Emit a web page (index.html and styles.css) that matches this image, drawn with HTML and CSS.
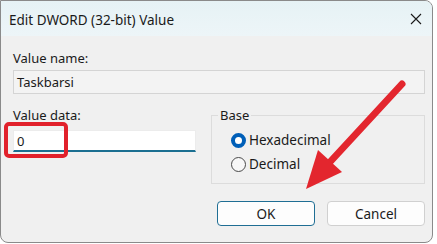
FILE: index.html
```html
<!DOCTYPE html>
<html lang="en">
<head>
  <meta charset="UTF-8">
  <title>Edit DWORD (32-bit) Value</title>
  <link rel="stylesheet" href="styles.css">
</head>
<body>
  <div class="window">
    <div class="titlebar">
      <span class="title">Edit DWORD (32-bit) Value</span>
      <svg class="close" viewBox="0 0 12 12" width="12" height="12">
        <path d="M1 1 L11 11 M11 1 L1 11" stroke="#1a1a1a" stroke-width="1.1" fill="none"/>
      </svg>
    </div>

    <div class="content">
      <div class="label name-label">Value name:</div>
      <div class="field readonly">Taskbarsi</div>

      <div class="row">
        <div class="data-col">
          <div class="label">Value data:</div>
          <div class="field active">0</div>
        </div>

        <fieldset class="group">
          <legend>Base</legend>
          <label class="radio">
            <span class="dot checked"></span>Hexadecimal
          </label>
          <label class="radio">
            <span class="dot"></span>Decimal
          </label>
        </fieldset>
      </div>

      <div class="buttons">
        <button class="btn default">OK</button>
        <button class="btn">Cancel</button>
      </div>
    </div>

    <!-- annotation drawn on top of the screenshot -->
    <svg class="marks" viewBox="0 0 437 244" width="437" height="244">
      <rect x="6" y="124" width="60" height="32" rx="3" fill="none" stroke="#e1212b" stroke-width="4"/>
      <line x1="402" y1="84" x2="330" y2="162" stroke="#e3262e" stroke-width="7" stroke-linecap="round"/>
      <polygon points="306,189 342,172 318,150" fill="#e3262e"/>
    </svg>
  </div>
</body>
</html>
```

FILE: styles.css
```css
* {
  margin: 0;
  padding: 0;
  box-sizing: border-box;
}

body {
  background: #ffffff;
  font-family: 'Noto Sans', 'Open Sans', sans-serif;
  font-size: 13px;
  color: #1a1a1a;
}

.window {
  position: relative;
  width: 433px;
  height: 243px;
  background: #f0f0f0;
  border: 1px solid #8a8a8a;
  border-radius: 0 8px 8px 8px;
  overflow: hidden;
}

.titlebar {
  height: 35px;
  display: flex;
  align-items: center;
  justify-content: space-between;
  padding: 0 10px 0 8px;
  background: linear-gradient(180deg, #e6f2f5 0%, #edf5f8 100%);
}

.title {
  font-size: 13.5px;
  line-height: 16px;
  padding-top: 2px;
}

.close {
  display: block;
  margin-top: 1px;
}

.content {
  padding: 14px 7px 0 12px;
}

.label {
  line-height: 16px;
}

.field {
  height: 24px;
  line-height: 22px;
  padding: 0 3px;
  border: 1px solid #d4d4d4;
}

.field.readonly {
  margin-top: 4px;
  background: #f3f3f3;
}

.field.active {
  width: 183px;
  height: 22px;
  line-height: 20px;
  margin-top: 7px;
  background: #ffffff;
  border-color: #ececec;
  border-bottom: 2px solid #1b6f91;
}

.row {
  display: flex;
  justify-content: space-between;
  margin-top: 13px;
}

.group {
  width: 214px;
  height: 77px;
  border: 1px solid #dcdcdc;
  padding: 5px 0 0 6px;
}

.group legend {
  padding: 0 2px;
  line-height: 16px;
}

.radio {
  display: flex;
  align-items: center;
  height: 24px;
  margin-left: 13px;
  font-size: 13.5px;
}

.dot {
  width: 15px;
  height: 15px;
  margin-right: 3px;
  border-radius: 50%;
  border: 1px solid #4a4a4a;
  background: #f7f7f7;
}

.dot.checked {
  border: 4px solid #005fb8;
  background: #ffffff;
}

.buttons {
  display: flex;
  justify-content: flex-end;
  gap: 12px;
  margin-top: 17px;
}

.btn {
  width: 98px;
  height: 25px;
  font-family: inherit;
  font-size: 13.5px;
  color: #1a1a1a;
  background: #fdfdfd;
  border: 1px solid #d0d0d0;
  border-radius: 4px;
}

.btn.default {
  border-color: #1f6e94;
}

.marks {
  position: absolute;
  top: -1px;
  left: -1px;
  pointer-events: none;
}
```
